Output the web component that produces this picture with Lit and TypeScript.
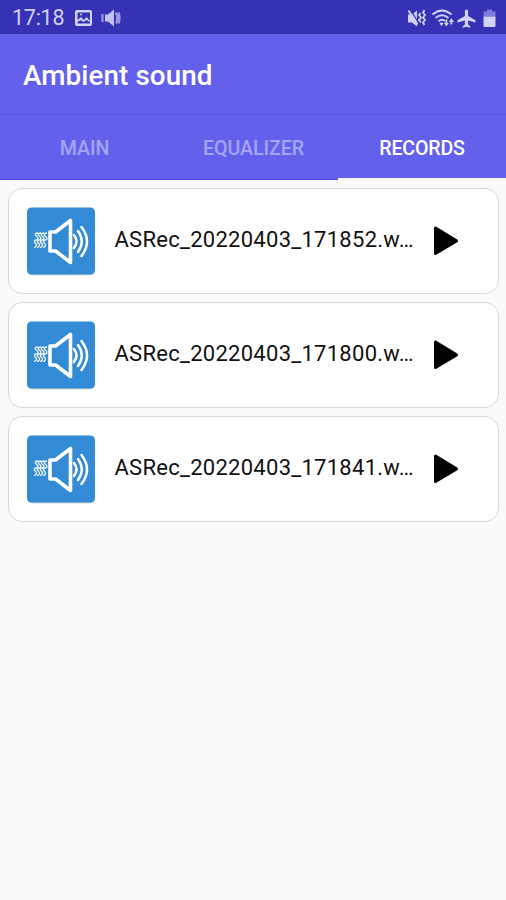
import { LitElement, html, css, svg } from "lit";
import { customElement, property } from "lit/decorators.js";

@customElement("status-bar")
class StatusBar extends LitElement {
  static styles = css`
    :host { display: flex; align-items: center; height: 34px; box-sizing: border-box; padding: 1px 9px 0 12px; background: #3631b5; color: #d3d2f5; }
    .time { font-size: 21.5px; line-height: 34px; width: 62px; white-space: nowrap; letter-spacing: -0.25px; }
    svg { display: block; flex: none; }
    .right { margin-left: auto; }
  `;
  render() {
    return html`
      <span class="time">17:18</span>
      <svg width="48" height="34" viewBox="74 0 48 34">
        <path fill="#d3d2f5" fill-rule="evenodd" d="M77 9h13q2 0 2 2v12q0 2-2 2h-13q-2 0-2-2v-12q0-2 2-2zM77.5 11.5v7.500l3.500-3 3 3 2.500-3 3.500 4v-8.500zM77.500 21v1.500h12.500v-1.500l-3.500-2-3 2-3-2z"/>
        <circle cx="81" cy="13.500" r="1" fill="#d3d2f5"/>
        <path fill="#c3c1ef" d="M105 13.500h3l6-5v17l-6-5h-3z"/>
        <path fill="none" stroke="#9c99df" stroke-width="2.200" d="M102.500 13v8M116 11.500q2.500 5.500 0 11M118.500 11.500q2 5.500 0 11"/>
      </svg>
      <svg class="right" width="90" height="34" viewBox="407 0 90 34">
        <path fill="#d3d2f5" d="M408 13.500h4l5-4v16l-5-4h-4z"/>
        <path d="M410 8l8 13" stroke="#3631b5" stroke-width="1.300"/>
        <path d="M408.500 9.500l9 14" stroke="#d3d2f5" stroke-width="2"/>
        <path fill="none" stroke="#d3d2f5" stroke-width="1.800" d="M420.500 12l-1.500 2 2 2.500-2 2.500 2 2.500M424.500 9l-1.500 2.500 2 2.500-2 2.500 2 2.500-2 2.500 1.500 2.500"/>
        <path fill="none" stroke="#d3d2f5" stroke-width="2" d="M432.500 13.500q9.500-8 19 0M435.500 17q6.500-5.500 13 0M438.500 20.300q3.500-3 6.500-.300"/>
        <path fill="#d3d2f5" d="M439.500 22.500q2-2 4 0l-2 2.500zM444 22h1.500v-3.500h1.800v3.500h1.500l-2.400 3.500zM448.800 21l2.600-3.700 2.600 3.700h-1.700v2.500h-1.800v-2.500z"/>
        <path fill="#d3d2f5" d="M466.500 8.500q1.600 0 1.600 2v4.500l7.400 4.300v2.200l-7.400-2v4l2.200 1.700v1.500l-3.800-1-3.800 1v-1.500l2.200-1.700v-4l-7.400 2v-2.200l7.400-4.300v-4.500q0-2 1.600-2z"/>
        <path fill="#807ddb" d="M487 8.500h5v2h3.500v5h-12v-5h3.500z"/>
        <path fill="#d3d2f5" d="M483.500 15.500h12v9q0 1.500-1.500 1.500h-9q-1.500 0-1.500-1.500z"/>
      </svg>`;
  }
}

@customElement("record-card")
class RecordCard extends LitElement {
  @property() name = "";
  static styles = css`
    :host { display: flex; align-items: center; height: 106px; box-sizing: border-box; padding: 0 38px 0 17px; border: 1.500px solid #d8d8d8; border-radius: 14px; background: #fff; }
    svg { display: block; flex: none; }
    .name { flex: 1; margin: -3px 0 0 18.500px; font-size: 22px; line-height: 30px; color: #111; white-space: nowrap; letter-spacing: 0.270px; }
    .play { margin-right: 1px; }
  `;
  render() {
    const waves = [0, 1, 2, 3].map((i) => svg`<path d="M${12 + i * 3} 27c-3.500 0-3.500 2-1.300 3.500s1.300 3.500-.700 3.500-2.200 2-.300 3.500.300 4-1.500 4"/>`);
    return html`
      <svg width="70" height="70" viewBox="0 0 70 70">
        <rect x="1.300" y="2" width="67.400" height="67.400" rx="5" fill="#d0d4d7"/>
        <rect x="1" y="1.500" width="68" height="67" rx="4.500" fill="#338bd5"/>
        <g fill="none" stroke="#fff">
          <g stroke-width="1.300">${waves}</g>
          <path stroke-width="3.600" stroke-linejoin="round" d="M24 26h5.500L44.500 14.500v42L29.500 45h-5.500z"/>
          <path stroke-width="2.500" stroke-linecap="round" d="M48 29q5 6.500 0 13M52 25q7.500 10.500 0 21M55.500 21q11 14.500 0 29"/>
        </g>
      </svg>
      <span class="name">${this.name}</span>
      <svg class="play" width="26" height="32" viewBox="0 0 26 32"><path d="M2.500 3v25.500L23.500 15.900z" stroke="#000" stroke-width="3" stroke-linejoin="round"/></svg>`;
  }
}

@customElement("app-root")
class AppRoot extends LitElement {
  static styles = css`
    :host { display: flex; flex-direction: column; height: 900px; background: #fafafa; font-family: Roboto, sans-serif; overflow: hidden; }
    .title { height: 79px; box-sizing: border-box; padding: 0 23px; background: #6361eb; color: #fff; font-size: 27.800px; line-height: 83px; font-weight: 500; letter-spacing: 0.100px; white-space: nowrap; }
    .tabs { display: grid; grid-template-columns: 169px 169px 168px; height: 67px; box-sizing: border-box; border-top: 2px solid #5d59e2; background: #6361eb; }
    .tab { height: 65px; text-align: center; color: #a6a4f4; font-size: 19.600px; line-height: 68px; font-weight: 500; letter-spacing: -0.050px; box-sizing: border-box; border-bottom: 1px solid #524de0; white-space: nowrap; }
    .active { color: #fff; border-bottom: 2px solid #f5f5ff; letter-spacing: -0.200px; }
    .list { display: flex; flex-direction: column; gap: 8px; padding: 8px 7px 0 8px; }
  `;
  render() {
    return html`
      <status-bar></status-bar>
      <div class="title">Ambient sound</div>
      <div class="tabs">
        <div class="tab">MAIN</div><div class="tab">EQUALIZER</div><div class="tab active">RECORDS</div>
      </div>
      <div class="list">
        ${["171852", "171800", "171841"].map((t) => html`<record-card .name=${`ASRec_20220403_${t}.w…`}></record-card>`)}
      </div>`;
  }
}
